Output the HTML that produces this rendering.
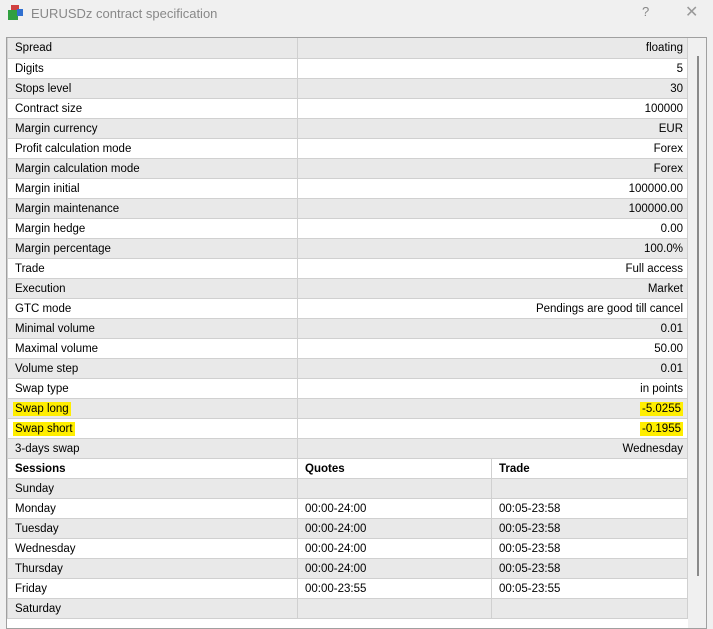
<!DOCTYPE html>
<html><head><style>
body{margin:0;width:713px;height:617px;overflow:hidden;background:#f0f0f0;font-family:"Liberation Sans",sans-serif;font-size:11.5px;color:#000;position:relative}
.title{position:absolute;left:31px;top:6px;font-size:13px;color:#888}
.q{position:absolute;left:642px;top:4px;font-size:13px;color:#888}
.x{position:absolute;left:685px;top:2px;font-size:16px;color:#999}
.box{position:absolute;left:6px;top:37px;width:699px;height:590px;border:1px solid #a0a0a0;background:#fff;overflow:hidden}
.sb{position:absolute;left:681px;top:0;width:18px;height:100%;background:#f0f0f0}
.thumb{position:absolute;left:690px;top:18px;width:2px;height:520px;background:#8a8a8a}
table{border-collapse:collapse;width:681px;table-layout:fixed}
td,th{height:20px;padding:2px 0 0 7px;box-sizing:border-box;border:1px solid #d0d0d0;border-top:none;white-space:nowrap;overflow:hidden;line-height:17px;font-size:11.5px}
tr{height:20px}
table.a tr:nth-child(odd) td{background:#e9e9e9}
table.b tr:nth-child(even) td{background:#e9e9e9}
td.r{text-align:right;padding:2px 4px 0 0}
.hl{background:#ffee00;padding:1px 2px}
th{text-align:left;background:#fff}
</style></head><body>
<svg style="position:absolute;left:8px;top:5px" width="16" height="16"><rect x="3" y="0" width="8" height="5" fill="#d04040"/><rect x="0" y="5" width="10" height="10" fill="#30a040"/><rect x="9" y="4" width="6" height="7" fill="#3070d0"/></svg>
<div class="title">EURUSDz contract specification</div>
<div class="q">?</div><div class="x">✕</div>
<div class="box">
<table class="a">
<col style="width:290px"><col>
<tr><td>Spread</td><td class="r">floating</td></tr>
<tr><td>Digits</td><td class="r">5</td></tr>
<tr><td>Stops level</td><td class="r">30</td></tr>
<tr><td>Contract size</td><td class="r">100000</td></tr>
<tr><td>Margin currency</td><td class="r">EUR</td></tr>
<tr><td>Profit calculation mode</td><td class="r">Forex</td></tr>
<tr><td>Margin calculation mode</td><td class="r">Forex</td></tr>
<tr><td>Margin initial</td><td class="r">100000.00</td></tr>
<tr><td>Margin maintenance</td><td class="r">100000.00</td></tr>
<tr><td>Margin hedge</td><td class="r">0.00</td></tr>
<tr><td>Margin percentage</td><td class="r">100.0%</td></tr>
<tr><td>Trade</td><td class="r">Full access</td></tr>
<tr><td>Execution</td><td class="r">Market</td></tr>
<tr><td>GTC mode</td><td class="r">Pendings are good till cancel</td></tr>
<tr><td>Minimal volume</td><td class="r">0.01</td></tr>
<tr><td>Maximal volume</td><td class="r">50.00</td></tr>
<tr><td>Volume step</td><td class="r">0.01</td></tr>
<tr><td>Swap type</td><td class="r">in points</td></tr>
<tr><td><span class="hl" style="margin-left:-2px">Swap long</span></td><td class="r"><span class="hl">-5.0255</span></td></tr>
<tr><td><span class="hl" style="margin-left:-2px">Swap short</span></td><td class="r"><span class="hl">-0.1955</span></td></tr>
<tr><td>3-days swap</td><td class="r">Wednesday</td></tr>
</table>
<table class="b">
<col style="width:290px"><col style="width:194px"><col>
<tr><th>Sessions</th><th>Quotes</th><th>Trade</th></tr>
<tr><td>Sunday</td><td></td><td></td></tr>
<tr><td>Monday</td><td>00:00-24:00</td><td>00:05-23:58</td></tr>
<tr><td>Tuesday</td><td>00:00-24:00</td><td>00:05-23:58</td></tr>
<tr><td>Wednesday</td><td>00:00-24:00</td><td>00:05-23:58</td></tr>
<tr><td>Thursday</td><td>00:00-24:00</td><td>00:05-23:58</td></tr>
<tr><td>Friday</td><td>00:00-23:55</td><td>00:05-23:55</td></tr>
<tr><td>Saturday</td><td></td><td></td></tr>
</table>
<div class="sb"></div><div class="thumb"></div>
</div>
</body></html>
